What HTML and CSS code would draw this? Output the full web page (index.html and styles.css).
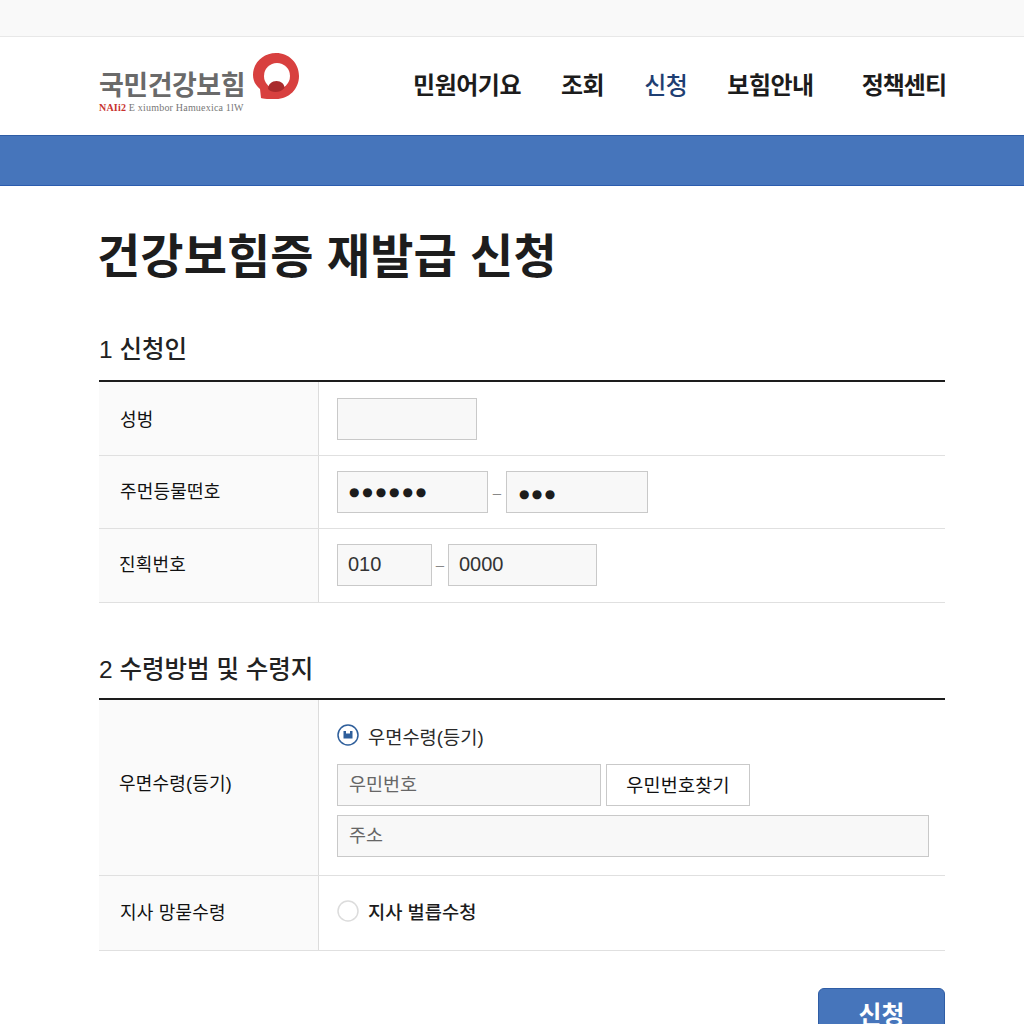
FILE: index.html
```html
<!DOCTYPE html>
<html lang="ko">
<head>
<meta charset="utf-8">
<title>건강보험증 재발급 신청</title>
<link rel="stylesheet" href="styles.css">
</head>
<body>
<div class="topbar"></div>
<header class="header">
  <div class="logo">
    <div class="logo-text">
      <div class="logo-ko">국민건강보힘</div>
      <div class="logo-en"><span class="logo-red">NAIi2</span> E xiumbor Hamuexica 1lW</div>
    </div>
    <svg class="logo-mark" width="48" height="48" viewBox="0 0 48 48">
      <path d="M24 1C11 1 1 11 1 23c0 6 3 11 7 14l1 9c1 1 10 1 15 1c13 0 23-10 23-23C47 11 37 1 24 1z" fill="#d8403f"/>
      <circle cx="25" cy="24" r="13" fill="#fff"/>
      <path d="M16 37c0-5 4-8 8.500-8s8 3 8 7c-3 3-6 4-9 4s-6-1-7.500-3z" fill="#a92a2c"/>
    </svg>
  </div>
  <nav class="nav">
    <a class="nav-item">민원어기요</a>
    <a class="nav-item">조회</a>
    <a class="nav-item nav-active">신청</a>
    <a class="nav-item">보힘안내</a>
    <a class="nav-item nav-last">정책센티</a>
  </nav>
</header>
<div class="band"></div>
<main class="main">
  <h1 class="title">건강보힘증 재발급 신청</h1>

  <h2 class="section section-first">1 신청인</h2>
  <div class="table">
    <div class="row row-name">
      <div class="label">성벙</div>
      <div class="cell"><div class="box w140 h42"></div></div>
    </div>
    <div class="row row-rrn">
      <div class="label">주먼등물떤호</div>
      <div class="cell">
        <div class="box w151 h42 dots">●●●●●●</div>
        <span class="dash dash-wide">–</span>
        <div class="box w142 h42 dots dots-low">●●●</div>
      </div>
    </div>
    <div class="row row-tel">
      <div class="label">진획번호</div>
      <div class="cell">
        <div class="box w95 h42 digits">010</div>
        <span class="dash">–</span>
        <div class="box w149 h42 digits">0000</div>
      </div>
    </div>
  </div>

  <h2 class="section section-second">2 수령방범 및 수령지</h2>
  <div class="table">
    <div class="row row-post">
      <div class="label">우면수령(등기)</div>
      <div class="cell cell-stack">
        <label class="radio-line">
          <svg class="radio" width="22" height="22" viewBox="0 0 22 22">
            <circle cx="11" cy="11" r="10" fill="#fff" stroke="#2f5f9b" stroke-width="1.500"/>
            <path d="M6.500 7h2.500v2.500h4v-2.500h2.500v7.500h-9z" fill="#2f5f9b"/>
          </svg>
          <span>우면수령(등기)</span>
        </label>
        <div class="line">
          <div class="box w264 h42 muted">우민번호</div>
          <button class="find">우민번호찾기</button>
        </div>
        <div class="box full h42 muted">주소</div>
      </div>
    </div>
    <div class="row row-branch">
      <div class="label">지사 망묻수령</div>
      <div class="cell">
        <label class="radio-line">
          <svg class="radio" width="22" height="22" viewBox="0 0 22 22">
            <circle cx="11" cy="11" r="10" fill="#fff" stroke="#dcdcdc" stroke-width="1.500"/>
          </svg>
          <span class="strong">지사 벌릅수청</span>
        </label>
      </div>
    </div>
  </div>

  <div class="actions"><button class="submit">신청</button></div>
</main>
</body>
</html>
```
FILE: styles.css
```css
* { box-sizing: border-box; }
html, body { margin: 0; padding: 0; height: 1024px; overflow: hidden; }
body {
  background: #fff;
  color: #1b1b1b;
  font-family: "Liberation Sans", "Noto Sans CJK KR", sans-serif;
}
.topbar { height: 37px; background: #f9f9f9; border-bottom: 1px solid #e8e8e8; }
.header {
  height: 98px;
  padding: 0 78px 0 99px;
  display: flex;
  align-items: center;
  justify-content: space-between;
}
.logo { display: flex; align-items: flex-start; position: relative; margin-top: -4px; }
.logo-text { margin-top: 15px; }
.logo-ko {
  font-size: 27px;
  font-weight: 700;
  line-height: 32px;
  color: #6a6a6a;
  letter-spacing: -0.500px;
  white-space: nowrap;
}
.logo-en {
  font-family: "Liberation Serif", serif;
  font-size: 10px;
  line-height: 12px;
  color: #777;
  letter-spacing: 0.200px;
  white-space: nowrap;
}
.logo-red { color: #c8322f; font-weight: 700; }
.logo-mark { margin-left: 7px; margin-top: -3px; }
.nav { display: flex; gap: 40px; margin-top: -1px; }
.nav-item {
  font-size: 24px;
  font-weight: 700;
  line-height: 32px;
  color: #1c1c1c;
  letter-spacing: -0.500px;
  white-space: nowrap;
}
.nav-active { color: #1f3f73; font-weight: 500; }
.nav-last { margin-left: 8px; letter-spacing: -1px; }
.band {
  height: 51px;
  background: #4675bb;
  border-top: 1px solid #2f5da5;
  border-bottom: 1px solid #2b5cae;
}
.main { padding: 0 79px 0 99px; }
.title {
  margin: 37px 0 0 -2px;
  font-size: 47px;
  line-height: 68px;
  font-weight: 700;
  color: #1d1d1d;
  letter-spacing: 0.100px;
}
.section {
  margin: 0 0 12px;
  font-size: 24.500px;
  line-height: 36px;
  font-weight: 500;
  color: #222;
}
.section-first { margin-top: 41px; }
.section-second { margin-top: 49px; margin-bottom: 10px; }
.table { border-top: 2px solid #1d1d1d; }
.row { display: grid; grid-template-columns: 220px 1fr; border-bottom: 1px solid #e0e0e0; }
.row-name { height: 74px; }
.row-rrn { height: 73px; }
.row-tel { height: 74px; }
.row-post { height: 176px; }
.row-branch { height: 75px; }
.label {
  display: flex;
  align-items: center;
  padding-left: 21px;
  background: #fafafa;
  border-right: 1px solid #dcdcdc;
  font-size: 18px;
  letter-spacing: 0.200px;
  color: #111;
}
.row-name .label { padding-bottom: 2px; }
.row-rrn .label { padding-bottom: 4px; }
.row-tel .label { padding: 0 0 5px 20px; }
.row-post .label { padding: 0 0 12px 20px; }
.row-branch .label { padding-bottom: 4px; }
.cell { display: flex; align-items: center; padding-left: 18px; }
.row-tel .cell { padding-bottom: 2px; }
.cell-stack {
  flex-direction: column;
  align-items: flex-start;
  padding: 20px 16px 18px 18px;
}
.box {
  display: flex;
  align-items: center;
  padding-left: 11px;
  background: #f8f8f8;
  border: 1px solid #c9c9c9;
  font-size: 19px;
  color: #2a2a2a;
  flex: none;
}
.h42 { height: 42px; }
.w95 { width: 95px; }
.w140 { width: 140px; }
.w142 { width: 142px; }
.w149 { width: 149px; }
.w151 { width: 151px; }
.w264 { width: 264px; }
.full { width: 100%; }
.muted { color: #666; font-size: 18.500px; padding-bottom: 4px; }
.digits { font-size: 20px; padding-left: 10px; color: #333; }
.dots {
  font-family: "DejaVu Sans", sans-serif;
  font-size: 12px;
  letter-spacing: 2.900px;
  color: #1c1c1c;
}
.dots-low { padding: 4px 0 0 12px; letter-spacing: 2.400px; }
.dash { width: 16px; text-align: center; color: #888; font-size: 15px; }
.dash-wide { width: 18px; }
.radio-line { display: flex; align-items: center; gap: 9px; font-size: 18.700px; color: #2a2a2a; }
.cell-stack .radio-line { height: 34px; margin-bottom: 12px; margin-top: -2px; }
.row-branch .radio-line { margin-bottom: 4px; }
.radio { flex: none; }
.strong { color: #1c1c1c; font-weight: 500; margin-top: -2px; }
.line { display: flex; gap: 5px; margin-bottom: 9px; }
.find {
  width: 144px;
  height: 42px;
  padding: 0 0 3px;
  background: #fff;
  border: 1px solid #c9c9c9;
  font: 400 18.500px "Liberation Sans", "Noto Sans CJK KR", sans-serif;
  letter-spacing: 0.200px;
  color: #111;
}
.actions { display: flex; justify-content: flex-end; margin-top: 37px; }
.submit {
  width: 127px;
  height: 76px;
  padding: 6px 0 0;
  background: #4675bb;
  border: 1px solid #2f5da5;
  border-radius: 6px;
  color: #fff;
  font: 700 25px "Liberation Sans", "Noto Sans CJK KR", sans-serif;
  display: flex;
  justify-content: center;
  align-items: flex-start;
}
```
